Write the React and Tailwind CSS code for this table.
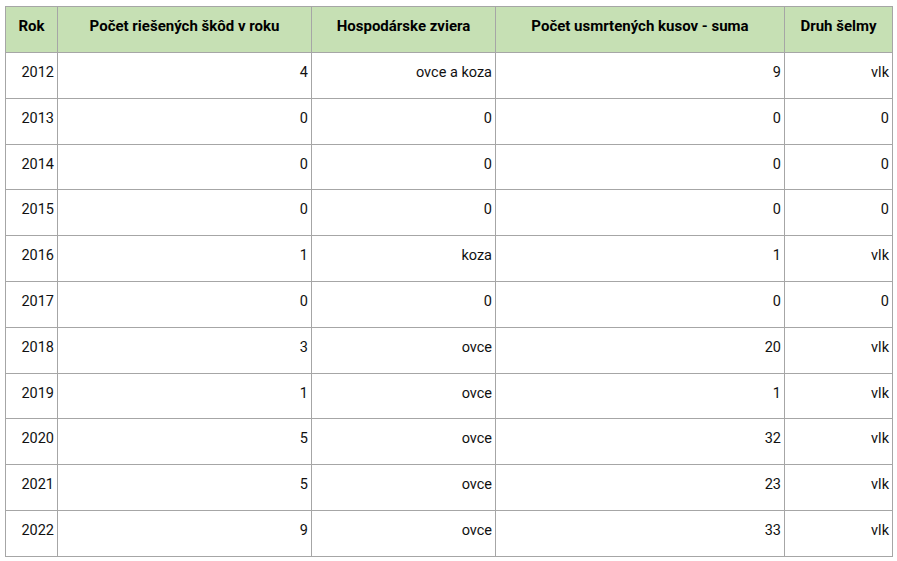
import React from "react";

const rows = [
  ["2012", "4", "ovce a koza", "9", "vlk"],
  ["2013", "0", "0", "0", "0"],
  ["2014", "0", "0", "0", "0"],
  ["2015", "0", "0", "0", "0"],
  ["2016", "1", "koza", "1", "vlk"],
  ["2017", "0", "0", "0", "0"],
  ["2018", "3", "ovce", "20", "vlk"],
  ["2019", "1", "ovce", "1", "vlk"],
  ["2020", "5", "ovce", "32", "vlk"],
  ["2021", "5", "ovce", "23", "vlk"],
  ["2022", "9", "ovce", "33", "vlk"],
];

const headers = [
  "Rok",
  "Počet riešených škôd v roku",
  "Hospodárske zviera",
  "Počet usmrtených kusov - suma",
  "Druh šelmy",
];

export default function App() {
  return (
    <div className="w-[897px] h-[561px] bg-white pl-[5px] pt-[6px]" style={{ fontFamily: "Roboto, 'Liberation Sans', sans-serif" }}>
      <table className="border-collapse table-fixed w-[888px] text-[14.5px] text-[#111]">
        <colgroup>
          <col className="w-[52px]" />
          <col className="w-[254px]" />
          <col className="w-[184px]" />
          <col className="w-[289px]" />
          <col className="w-[108px]" />
        </colgroup>
        <thead>
          <tr className="h-[46px] bg-[#c6e0b4]">
            {headers.map((h, i) => (
              <th key={i} className="border border-[#a6a6a6] align-top pt-[9px] px-1 text-center font-bold text-[15px] leading-[20px] text-black">
                {h}
              </th>
            ))}
          </tr>
        </thead>
        <tbody>
          {rows.map((r, ri) => (
            <tr key={ri} className="h-[45.8px]">
              {r.map((c, ci) => (
                <td key={ci} className="border border-[#a6a6a6] align-top pt-[10px] pr-[3px] pl-1 text-right leading-[20px]">
                  {c}
                </td>
              ))}
            </tr>
          ))}
        </tbody>
      </table>
    </div>
  );
}
